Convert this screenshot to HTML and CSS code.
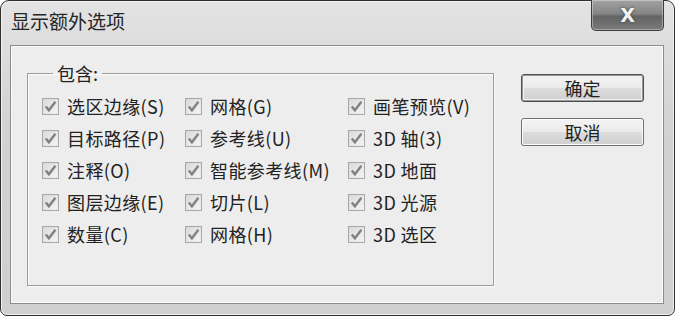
FILE: index.html
```html
<!DOCTYPE html>
<html lang="zh-CN">
<head>
    <meta charset="UTF-8">
    <title>显示额外选项</title>
    <link rel="stylesheet" href="styles.css">
</head>
<body>
    <div class="window">
        <div class="titlebar">
            <span class="title">显示额外选项</span>
            <button class="close-btn">X</button>
        </div>

        <div class="client">
            <fieldset class="group">
                <legend>包含:</legend>
                <div class="options" id="options">
                    <!-- options are added below -->
                </div>
            </fieldset>

            <div class="actions">
                <button class="btn default">确定</button>
                <button class="btn">取消</button>
            </div>
        </div>
    </div>

    <script>
        const columns = [
            ["选区边缘(S)", "目标路径(P)", "注释(O)", "图层边缘(E)", "数量(C)"],
            ["网格(G)", "参考线(U)", "智能参考线(M)", "切片(L)", "网格(H)"],
            ["画笔预览(V)", "3D 轴(3)", "3D 地面", "3D 光源", "3D 选区"]
        ];

        const check = `<svg viewBox="0 0 16 16" width="17" height="17">
            <rect x="0.5" y="0.5" width="15" height="15" fill="url(#boxfill)" stroke="#a9a9a9"/>
            <path d="M3.6 8 L6.5 11.6 L12.6 3.6" fill="none" stroke="#808080" stroke-width="2.2"/>
        </svg>`;

        const options = document.getElementById('options');

        columns.forEach(col => {
            const column = document.createElement('div');
            column.className = 'column';
            col.forEach(label => {
                const row = document.createElement('label');
                row.className = 'option';
                row.innerHTML = `<span class="box">${check}</span><span>${label}</span>`;
                column.appendChild(row);
            });
            options.appendChild(column);
        });
    </script>

    <svg width="0" height="0" class="defs">
        <defs>
            <linearGradient id="boxfill" x1="0" y1="0" x2="1" y2="1">
                <stop offset="0" stop-color="#d9d9d9"/>
                <stop offset="1" stop-color="#f6f6f6"/>
            </linearGradient>
        </defs>
    </svg>
</body>
</html>
```

FILE: styles.css
```css
body {
    margin: 0;
    padding: 0;
    background-color: #ffffff;
    font-family: "Noto Sans CJK SC", "Noto Sans", sans-serif;
    color: #222222;
}

.defs {
    position: absolute;
}

.window {
    width: 675px;
    height: 316px;
    box-sizing: border-box;
    border: 1px solid #2e2e2e;
    border-radius: 9px 9px 7px 7px;
    background: linear-gradient(to bottom, #e3e3e3, #d2d2d2 40%, #cfcfcf);
    box-shadow: inset 0 0 0 1px #f2f2f2;
    padding: 0 10px 11px 9px;
    display: flex;
    flex-direction: column;
}

.titlebar {
    height: 44px;
    display: flex;
    justify-content: space-between;
    align-items: flex-start;
}

.title {
    font-size: 19px;
    line-height: 24px;
    margin: 8px 0 0 1px;
    color: #262626;
}

.close-btn {
    width: 73px;
    height: 31px;
    margin-top: -1px;
    border: 1px solid #3c3c3c;
    border-top: none;
    border-radius: 0 0 5px 5px;
    background: linear-gradient(to bottom, #a2a2a2, #858585 45%, #646464 55%, #7a7a7a);
    box-shadow: inset 0 0 0 1px rgba(255, 255, 255, 0.35);
    color: #f4f4f4;
    font-family: "DejaVu Sans", sans-serif;
    font-weight: bold;
    font-size: 19px;
    line-height: 28px;
    padding: 0;
    text-shadow: 0 0 3px #3a3a3a;
}

.client {
    flex: 1;
    display: flex;
    align-items: flex-start;
    background-color: #ededed;
    border: 1px solid #8c8c8c;
    box-shadow: inset 0 0 0 1px #fafafa;
    padding: 16px 0 0 16px;
}

.group {
    width: 467px;
    height: 224px;
    box-sizing: border-box;
    margin: 0;
    padding: 0 0 0 14px;
    border: 1px solid #9c9c9c;
    box-shadow: inset 1px 1px 0 #fbfbfb, 1px 1px 0 #fbfbfb;
}

.group legend {
    font-size: 18px;
    line-height: 22px;
    padding: 0 4px;
    margin-left: 11px;
}

.options {
    display: flex;
    padding-top: 6px;
}

.column {
    display: flex;
    flex-direction: column;
}

.column:nth-child(1) {
    width: 143px;
}

.column:nth-child(2) {
    width: 163px;
}

.option {
    height: 32px;
    display: flex;
    align-items: center;
    gap: 8px;
    font-size: 18px;
    letter-spacing: 0.4px;
    white-space: nowrap;
}

.box {
    width: 17px;
    height: 17px;
    display: flex;
}

.actions {
    display: flex;
    flex-direction: column;
    gap: 16px;
    margin-left: 27px;
    margin-top: 12px;
}

.btn {
    width: 123px;
    height: 28px;
    border: 1px solid #707070;
    border-radius: 3px;
    background: linear-gradient(to bottom, #f4f4f4, #ebebeb 48%, #dcdcdc 52%, #cfcfcf);
    box-shadow: inset 0 0 0 1px #fcfcfc;
    font-family: "Noto Sans CJK SC", sans-serif;
    font-size: 18px;
    line-height: 24px;
    color: #222222;
    padding: 0;
}

.btn.default {
    border-color: #4f4f4f;
    box-shadow: inset 0 0 0 1px #9a9a9a, inset 0 0 0 2px #f0f0f0;
}
```
